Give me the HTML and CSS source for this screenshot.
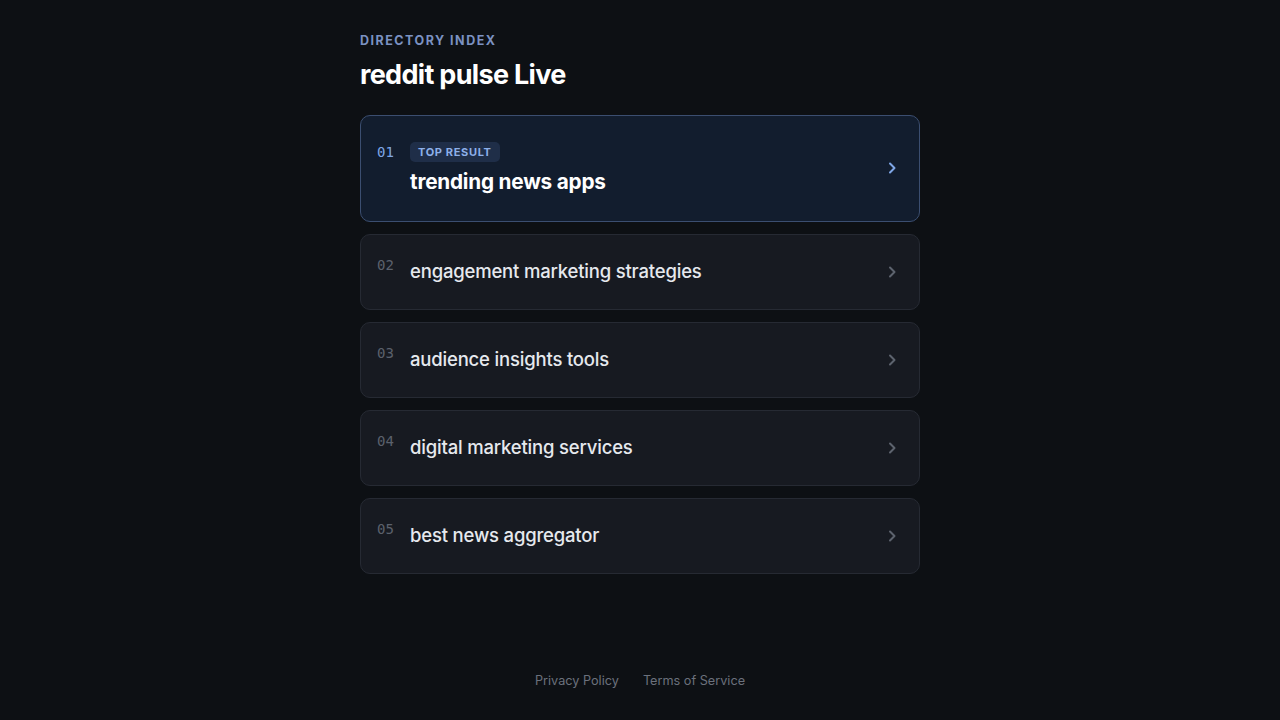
FILE: index.html
```html
<!DOCTYPE html>
<html>
<head>
<meta charset="utf-8">
<link rel="stylesheet" href="styles.css">
</head>
<body>
<div class="page">
  <main class="main">
    <div class="eyebrow">DIRECTORY INDEX</div>
    <h1 class="title">reddit pulse Live</h1>
    <ul class="list">
      <li class="card card-top">
        <span class="num num-top">01</span>
        <div class="body">
          <span class="badge">TOP RESULT</span>
          <span class="label label-top">trending news apps</span>
        </div>
        <svg class="chev chev-top" viewBox="0 0 16 16" width="16" height="16"><path d="M6 3.5 L10.5 8 L6 12.5" fill="none" stroke="currentColor" stroke-width="2" stroke-linecap="round" stroke-linejoin="round"/></svg>
      </li>
      <li class="card">
        <span class="num">02</span>
        <div class="body"><span class="label">engagement marketing strategies</span></div>
        <svg class="chev" viewBox="0 0 16 16" width="16" height="16"><path d="M6 3.5 L10.5 8 L6 12.5" fill="none" stroke="currentColor" stroke-width="2" stroke-linecap="round" stroke-linejoin="round"/></svg>
      </li>
      <li class="card">
        <span class="num">03</span>
        <div class="body"><span class="label">audience insights tools</span></div>
        <svg class="chev" viewBox="0 0 16 16" width="16" height="16"><path d="M6 3.5 L10.5 8 L6 12.5" fill="none" stroke="currentColor" stroke-width="2" stroke-linecap="round" stroke-linejoin="round"/></svg>
      </li>
      <li class="card">
        <span class="num">04</span>
        <div class="body"><span class="label">digital marketing services</span></div>
        <svg class="chev" viewBox="0 0 16 16" width="16" height="16"><path d="M6 3.5 L10.5 8 L6 12.5" fill="none" stroke="currentColor" stroke-width="2" stroke-linecap="round" stroke-linejoin="round"/></svg>
      </li>
      <li class="card">
        <span class="num">05</span>
        <div class="body"><span class="label">best news aggregator</span></div>
        <svg class="chev" viewBox="0 0 16 16" width="16" height="16"><path d="M6 3.5 L10.5 8 L6 12.5" fill="none" stroke="currentColor" stroke-width="2" stroke-linecap="round" stroke-linejoin="round"/></svg>
      </li>
    </ul>
  </main>
  <footer class="footer">
    <a class="flink">Privacy Policy</a>
    <a class="flink">Terms of Service</a>
  </footer>
</div>
</body>
</html>
```
FILE: styles.css
```css
* { box-sizing: border-box; }
html, body { margin: 0; padding: 0; }
body {
  background: #0d1014;
  font-family: Inter, "Noto Sans", sans-serif;
  color: #f2f4f7;
}
.page {
  min-height: 100vh;
  display: flex;
  flex-direction: column;
  align-items: center;
}
.main {
  width: 560px;
  padding-top: 33px;
  flex: 1;
}
.eyebrow {
  font-size: 12.5px;
  font-weight: 700;
  letter-spacing: 0.12em;
  color: #7b92c2;
  line-height: 16px;
}
.title {
  margin: 10px 0 0 0;
  font-size: 27px;
  font-weight: 700;
  letter-spacing: -0.025em;
  line-height: 32px;
  color: #ffffff;
}
.list {
  list-style: none;
  margin: 24px 0 0 0;
  padding: 0;
  display: flex;
  flex-direction: column;
  gap: 12px;
}
.card {
  display: flex;
  align-items: flex-start;
  background: #171a21;
  border: 1px solid #262a33;
  border-radius: 10px;
  padding: 22px 19px 24px 16px;
  min-height: 76px;
}
.card-top {
  background: #121d2e;
  border-color: #3b4e70;
  padding-top: 26px;
  padding-bottom: 25px;
  min-height: 107px;
}
.num {
  font-family: "DejaVu Sans Mono", "Liberation Mono", monospace;
  font-size: 14px;
  line-height: 14px;
  color: #5b616c;
  width: 33px;
  flex: none;
  margin-top: 1px;
}
.num-top {
  color: #7ea6e6;
  margin-top: 3px;
}
.body {
  flex: 1;
  display: flex;
  flex-direction: column;
  align-items: flex-start;
}
.badge {
  background: #1f2e48;
  color: #8db0ea;
  font-size: 11px;
  font-weight: 700;
  letter-spacing: 0.06em;
  line-height: 20px;
  padding: 0 8px;
  border-radius: 5px;
  margin-bottom: 6px;
}
.label {
  font-size: 18.5px;
  font-weight: 500;
  line-height: 28px;
  color: #e6e9ee;
  letter-spacing: -0.01em;
}
.label-top {
  font-weight: 700;
  font-size: 20.75px;
  color: #ffffff;
}
.chev {
  flex: none;
  align-self: center;
  color: #5d636e;
  margin-top: 2px;
}
.chev-top {
  color: #7ea6e6;
  margin-top: -2px;
}
.footer {
  display: flex;
  gap: 24px;
  padding-bottom: 31px;
}
.flink {
  font-size: 12.7px;
  color: #6b717c;
  line-height: 16px;
  text-decoration: none;
}
```
